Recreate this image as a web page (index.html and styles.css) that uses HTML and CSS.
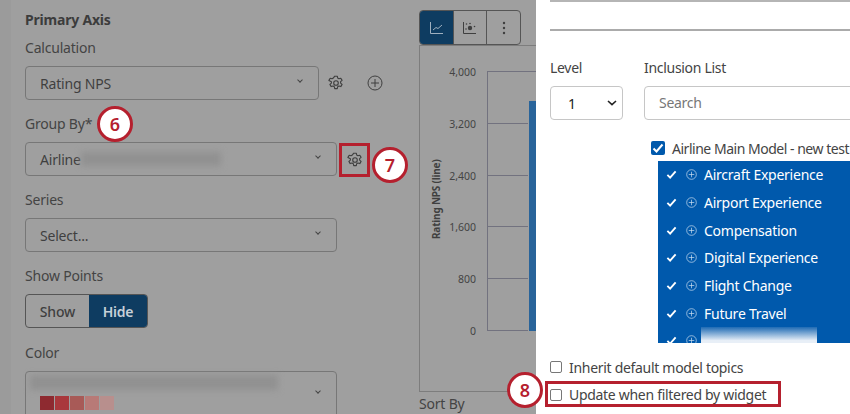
FILE: index.html
```html
<!DOCTYPE html>
<html lang="en">
<head>
<meta charset="utf-8">
<title>Widget settings</title>
<link rel="stylesheet" href="styles.css">
</head>
<body>
<svg class="defs" width="0" height="0" aria-hidden="true">
  <defs>
    <symbol id="gear" viewBox="0 0 16 16">
      <path fill="none" stroke="currentColor" stroke-width="1.1" stroke-linejoin="round" d="M6.7 1.2h2.6l.4 1.9 1.2.7 1.9-.6 1.3 2.2-1.5 1.3v1.4l1.5 1.3-1.3 2.2-1.9-.6-1.2.7-.4 1.9H6.7l-.4-1.9-1.2-.7-1.9.6-1.3-2.2 1.5-1.3V6.7L.9 5.4l1.3-2.2 1.9.6 1.2-.7z"/>
      <circle cx="8" cy="8" r="2.3" fill="none" stroke="currentColor" stroke-width="1.1"/>
    </symbol>
    <symbol id="plus" viewBox="0 0 16 16">
      <circle cx="8" cy="8" r="7" fill="none" stroke="currentColor" stroke-width="1"/>
      <path fill="none" stroke="currentColor" stroke-width="1" d="M8 4v8M4 8h8"/>
    </symbol>
    <symbol id="tick" viewBox="0 0 12 12">
      <path fill="none" stroke="currentColor" stroke-width="2" d="M1.5 6.5l3 3 6-7"/>
    </symbol>
  </defs>
</svg>
<div class="app">
  <main class="left">
    <section class="form">
      <h2 class="heading">Primary Axis</h2>
      <label class="label">Calculation</label>
      <div class="row">
        <div class="select narrow"><span>Rating NPS</span><i class="caret"></i></div>
        <svg class="icon gear-a"><use href="#gear"/></svg>
        <svg class="icon plus-a"><use href="#plus"/></svg>
      </div>
      <div class="label-row">
        <label class="label">Group By*</label>
        <span class="badge badge-6">6</span>
      </div>
      <div class="row">
        <div class="select"><span>Airline</span><span class="blur blur-group"></span><i class="caret"></i></div>
        <span class="hilite-gear"><svg class="icon"><use href="#gear"/></svg></span>
        <span class="badge badge-7">7</span>
      </div>
      <label class="label">Series</label>
      <div class="row"><div class="select"><span>Select...</span><i class="caret"></i></div></div>
      <label class="label">Show Points</label>
      <div class="toggle"><span class="opt">Show</span><span class="opt on">Hide</span></div>
      <label class="label color-label">Color</label>
      <div class="select tall">
        <span class="blur blur-color"></span>
        <span class="swatches"><b class="s1"></b><b class="s2"></b><b class="s3"></b><b class="s4"></b><b class="s5"></b></span>
        <i class="caret"></i>
      </div>
    </section>
    <section class="chart">
      <div class="tools">
        <span class="tool on">
          <svg width="16" height="16" viewBox="0 0 16 16"><path fill="none" stroke="currentColor" d="M2.5 2v11.5H15M5 10l3-2.5 2 1L14 5"/></svg>
        </span>
        <span class="tool">
          <svg width="16" height="16" viewBox="0 0 16 16"><path fill="none" stroke="currentColor" d="M1.5 2v11.5H14"/><circle cx="8" cy="8" r="2.2" fill="currentColor"/><circle cx="4.5" cy="4" r=".8" fill="currentColor"/><circle cx="8" cy="3.5" r=".8" fill="currentColor"/><circle cx="12.5" cy="6.5" r=".8" fill="currentColor"/><circle cx="4" cy="9" r=".8" fill="currentColor"/></svg>
        </span>
        <span class="tool">
          <svg width="16" height="16" viewBox="0 0 16 16"><circle cx="8" cy="3" r="1.2" fill="currentColor"/><circle cx="8" cy="8" r="1.2" fill="currentColor"/><circle cx="8" cy="13" r="1.2" fill="currentColor"/></svg>
        </span>
      </div>
      <div class="frame">
        <div class="ytitle">Rating NPS (line)</div>
        <div class="yticks"><span>4,000</span><span>3,200</span><span>2,400</span><span>1,600</span><span>800</span><span>0</span></div>
        <div class="plot">
          <div class="lines"><i></i><i></i><i></i><i></i><i></i></div>
          <div class="barcol"><div class="bar"></div></div>
        </div>
      </div>
      <div class="sort">Sort By</div>
    </section>
  </main>
  <aside class="right">
    <div class="rule-top"></div>
    <div class="rule-mid"></div>
    <div class="filters">
      <div class="level">
        <label class="rlabel">Level</label>
        <div class="levelbox"><span>1</span>
          <svg width="10" height="6" viewBox="0 0 10 6"><path fill="none" stroke="#222" stroke-width="1.6" d="M1 1l4 3.6L9 1"/></svg>
        </div>
      </div>
      <div class="incl">
        <label class="rlabel">Inclusion List</label>
        <div class="search">Search</div>
      </div>
    </div>
    <div class="tree">
      <div class="root"><span class="cb-on"><svg width="12" height="12"><use href="#tick"/></svg></span><span>Airline Main Model - new test</span></div>
      <ul class="list">
        <li><svg class="t"><use href="#tick"/></svg><svg class="p"><use href="#plus"/></svg>Aircraft Experience</li>
        <li><svg class="t"><use href="#tick"/></svg><svg class="p"><use href="#plus"/></svg>Airport Experience</li>
        <li><svg class="t"><use href="#tick"/></svg><svg class="p"><use href="#plus"/></svg>Compensation</li>
        <li><svg class="t"><use href="#tick"/></svg><svg class="p"><use href="#plus"/></svg>Digital Experience</li>
        <li><svg class="t"><use href="#tick"/></svg><svg class="p"><use href="#plus"/></svg>Flight Change</li>
        <li><svg class="t"><use href="#tick"/></svg><svg class="p"><use href="#plus"/></svg>Future Travel</li>
        <li><svg class="t"><use href="#tick"/></svg><svg class="p"><use href="#plus"/></svg><span class="blur-row"></span></li>
      </ul>
    </div>
    <div class="check"><span class="cb"></span>Inherit default model topics</div>
    <div class="check hilite-check"><span class="cb"></span>Update when filtered by widget<span class="badge badge-8">8</span></div>
  </aside>
</div>
</body>
</html>
```

FILE: styles.css
```css
* { box-sizing: border-box; }
html, body { margin: 0; height: 414px; overflow: hidden; }
body { font-family: "Noto Sans", "Open Sans", sans-serif; font-size: 14px; color: #3f3f3f; letter-spacing: -.2px; }
.defs { position: absolute; }
.app { display: flex; height: 414px; width: 850px; overflow: hidden; }

.left { width: 536px; flex: none; display: flex; background: #9f9f9f; overflow: hidden; box-shadow: inset 11px 0 0 #9b9b9b; }
.form { width: 419px; flex: none; padding: 10px 0 0 25px; }
.heading { margin: 0; font-size: 14px; line-height: 19px; font-weight: 700; color: #3c3c3c; }
.label { display: block; line-height: 19px; color: #444; }
.form > .label { margin-top: 14px; }
.form > .heading + .label { margin-top: 9px; }
.color-label { margin-top: 15px !important; }
.row { display: flex; align-items: center; margin-top: 9px; height: 34px; position: relative; }
.label-row { margin-top: 14px; height: 19px; position: relative; }
.select { position: relative; width: 312px; height: 34px; border: 1px solid #777; border-radius: 4px; padding: 0 14px; display: flex; align-items: center; color: #3f3f3f; }
.select.narrow { width: 294px; }
.caret { position: absolute; right: 16px; top: 11px; width: 4px; height: 4px; border-right: 1px solid #444; border-bottom: 1px solid #444; transform: rotate(45deg); }
.icon { width: 16px; height: 16px; color: #3f3f3f; display: block; }
.gear-a { margin-left: 9px; }
.plus-a { margin-left: 23px; }
.blur { display: block; background: #919191; filter: blur(3px); }
.blur-group { width: 140px; height: 14px; }
.hilite-gear { width: 31px; height: 34px; border: 3px solid #b5202e; margin: 2px 0 0 2px; display: flex; align-items: center; justify-content: center; }
.badge { position: absolute; width: 36px; height: 36px; border-radius: 50%; border: 3px solid #b5202e; background: #fff; color: #b5202e; font-weight: 600; font-size: 18px; letter-spacing: 0; display: flex; align-items: center; justify-content: center; }
.badge-6 { left: 72px; top: -8px; }
.badge-7 { left: 347px; top: 5px; }
.badge-8 { left: -41px; top: -12px; }
.toggle { display: flex; width: 123px; height: 34px; margin-top: 9px; border: 1px solid #555; border-radius: 4px; overflow: hidden; font-weight: 500; }
.opt { display: flex; align-items: center; justify-content: center; width: 64px; color: #3f3f3f; }
.opt.on { width: 59px; background: #0e3c61; color: #c6d0d8; font-weight: 600; }
.select.tall { display: block; height: 48px; margin-top: 9px; padding: 0; }
.tall .caret { top: 17px; }
.blur-color { position: absolute; left: 4px; top: 3px; width: 248px; height: 15px; }
.swatches { position: absolute; left: 14px; top: 24px; display: flex; gap: 1px; }
.swatches b { width: 14px; height: 14px; display: block; }
.s1 { background: #8e2a30; } .s2 { background: #a9383c; } .s3 { background: #a85a57; } .s4 { background: #b87a77; } .s5 { background: #b88f8d; }

.chart { flex: 1; min-width: 0; padding-top: 10px; }
.tools { display: flex; width: 102px; height: 35px; border: 1px solid #555; border-radius: 4px; overflow: hidden; }
.tool { flex: 1; display: flex; align-items: center; justify-content: center; color: #3f3f3f; border-left: 1px solid #555; }
.tool:first-child { border-left: 0; background: #0e3c61; color: #9fb0bf; }
.frame { height: 347px; border: 1px solid #7d7d7d; border-right: 0; display: flex; padding-top: 25px; position: relative; }
.ytitle { width: 29px; height: 260px; writing-mode: vertical-rl; transform: rotate(180deg) translate(-2px, 2px); font-size: 10px; font-weight: 700; text-align: center; line-height: 29px; color: #3f3f3f; }
.yticks { width: 27px; height: 273px; margin-top: -6px; display: flex; flex-direction: column; justify-content: space-between; align-items: flex-end; font-size: 10.5px; line-height: 14px; letter-spacing: 0; color: #444; }
.plot { margin-left: 11px; flex: 1; height: 260px; display: flex; border-top: 1px solid #72727f; }
.lines { width: 41px; flex: none; border-left: 1px solid #72727f; display: flex; flex-direction: column; }
.lines i { flex: 1; border-bottom: 1px solid #72727f; }
.barcol { flex: 1; margin-left: 1px; display: flex; align-items: flex-end; }
.bar { width: 100%; height: 230px; background: #29649a; }
.sort { line-height: 19px; margin-top: 2px; color: #444; }

.right { flex: 1; min-width: 0; background: #fff; padding-left: 14px; color: #444; letter-spacing: -.3px; }
.rule-top { height: 2px; background: #b5b5b5; }
.rule-mid { height: 2px; background: #ababab; margin-top: 27px; }
.filters { display: flex; gap: 21px; margin-top: 27px; }
.rlabel { display: block; line-height: 19px; }
.level { width: 73px; flex: none; }
.levelbox { margin-top: 9px; height: 34px; border: 1px solid #c6c6c6; border-radius: 4px; display: flex; align-items: center; justify-content: space-between; padding: 0 5px 0 17px; color: #222; font-size: 14px; }
.incl { flex: 1; margin-right: -20px; }
.search { margin-top: 9px; height: 34px; border: 1px solid #c6c6c6; border-radius: 4px; padding: 0 14px 2px; display: flex; align-items: center; color: #777; }
.tree { margin: 0 0 0 101px; width: 200px; }
.root { display: flex; align-items: center; gap: 7px; height: 20px; margin-top: 18px; white-space: nowrap; letter-spacing: -.48px; }
.cb-on { width: 14px; height: 14px; flex: none; border-radius: 2px; background: #0059ac; color: #fff; display: flex; align-items: center; justify-content: center; }
.list { list-style: none; margin: 3px 0 0 7px; padding: 0; height: 182px; background: #0059ac; color: #fff; overflow: hidden; width: 192px; font-weight: 400; letter-spacing: -.25px; }
.list li { height: 27.7px; display: flex; align-items: center; white-space: nowrap; }
.t { width: 11px; height: 11px; margin-left: 8px; color: #fff; flex: none; }
.p { width: 11px; height: 11px; margin-left: 9px; margin-right: 7px; color: #cfe0f0; flex: none; }
.blur-row { width: 116px; height: 17px; margin-left: -3px; align-self: flex-start; background: linear-gradient(#1f6bb4, #e8eff7 80%); filter: blur(.6px); }
.check { display: flex; align-items: center; gap: 7px; height: 20px; }
.cb { width: 12px; height: 12px; border: 1px solid #777; border-radius: 2px; flex: none; }
.tree + .check { margin-top: 14px; }
.hilite-check { position: relative; width: 236px; height: 26px; margin: 4px 0 0 -5px; padding: 1px 0 0 2px; border: 3px solid #b5202e; }
```
